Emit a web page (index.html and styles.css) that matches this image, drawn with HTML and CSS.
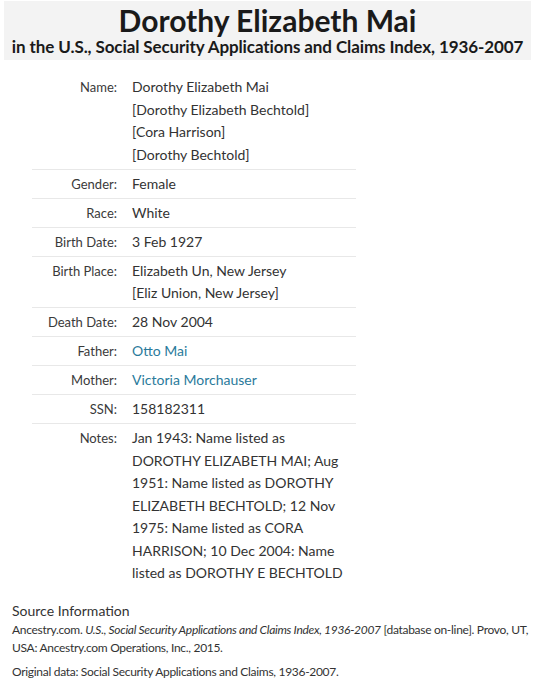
FILE: index.html
```html
<!DOCTYPE html>
<html lang="en">

<head>
  <meta charset="UTF-8" />
  <title>Dorothy Elizabeth Mai</title>
  <link rel="stylesheet" href="styles.css">
</head>

<body>

  <div class="header">
    <h1>Dorothy Elizabeth Mai</h1>
    <h2>in the U.S., Social Security Applications and Claims Index, 1936-2007</h2>
  </div>

  <table class="record">
    <tr>
      <th>Name:</th>
      <td>Dorothy Elizabeth Mai<br>[Dorothy Elizabeth Bechtold]<br>[Cora Harrison]<br>[Dorothy Bechtold]</td>
    </tr>
    <tr>
      <th>Gender:</th>
      <td>Female</td>
    </tr>
    <tr>
      <th>Race:</th>
      <td>White</td>
    </tr>
    <tr>
      <th>Birth Date:</th>
      <td>3 Feb 1927</td>
    </tr>
    <tr>
      <th>Birth Place:</th>
      <td>Elizabeth Un, New Jersey<br>[Eliz Union, New Jersey]</td>
    </tr>
    <tr>
      <th>Death Date:</th>
      <td>28 Nov 2004</td>
    </tr>
    <tr>
      <th>Father:</th>
      <td><a href="#">Otto Mai</a></td>
    </tr>
    <tr>
      <th>Mother:</th>
      <td><a href="#">Victoria Morchauser</a></td>
    </tr>
    <tr>
      <th>SSN:</th>
      <td>158182311</td>
    </tr>
    <tr class="last">
      <th>Notes:</th>
      <td>Jan 1943: Name listed as DOROTHY ELIZABETH MAI; Aug 1951: Name listed as DOROTHY ELIZABETH BECHTOLD; 12 Nov 1975: Name listed as CORA HARRISON; 10 Dec 2004: Name listed as DOROTHY E BECHTOLD</td>
    </tr>
  </table>

  <div class="source">
    <h3>Source Information</h3>
    <p>Ancestry.com. <em>U.S., Social Security Applications and Claims Index, 1936-2007</em> [database on-line]. Provo, UT, USA: Ancestry.com Operations, Inc., 2015.</p>
    <p>Original data: Social Security Applications and Claims, 1936-2007.</p>
  </div>

</body>

</html>
```

FILE: styles.css
```css
* {
  box-sizing: border-box;
}

body {
  margin: 0;
  padding: 1px 4px 0;
  font-family: Lato, sans-serif;
  color: #333;
  background: #fff;
}

.header {
  background: #f3f3f3;
  text-align: center;
  padding: 2px 0 3px;
}

h1 {
  margin: 0;
  font-size: 30px;
  line-height: 34px;
  color: #1a1a1a;
}

h2 {
  margin: 0;
  font-size: 17px;
  line-height: 20px;
  letter-spacing: -0.1px;
  white-space: nowrap;
  color: #1a1a1a;
}

.record {
  margin: 13px 0 0 28px;
  width: 324px;
  border-collapse: collapse;
  font-size: 14px;
  line-height: 22.5px;
}

.record tr {
  border-bottom: 1px solid #e8e8e8;
}

.record tr.last {
  border-bottom: none;
}

.record th {
  width: 85px;
  padding: 3px 0 2.5px;
  text-align: right;
  vertical-align: top;
  font-weight: normal;
  font-size: 13px;
  color: #3a3a3a;
}

.record td {
  padding: 3px 0 2.5px 15px;
  vertical-align: top;
  color: #333;
}

.record a {
  color: #2a7a9b;
  text-decoration: none;
}

.source {
  padding: 15px 0 0 8px;
  font-size: 12px;
  line-height: 18px;
  letter-spacing: -0.3px;
  color: #333;
}

.source h3 {
  margin: 0 0 1px;
  font-size: 14px;
  font-weight: normal;
  line-height: 18px;
  letter-spacing: 0;
}

.source p {
  margin: 0 0 6px;
}
```
